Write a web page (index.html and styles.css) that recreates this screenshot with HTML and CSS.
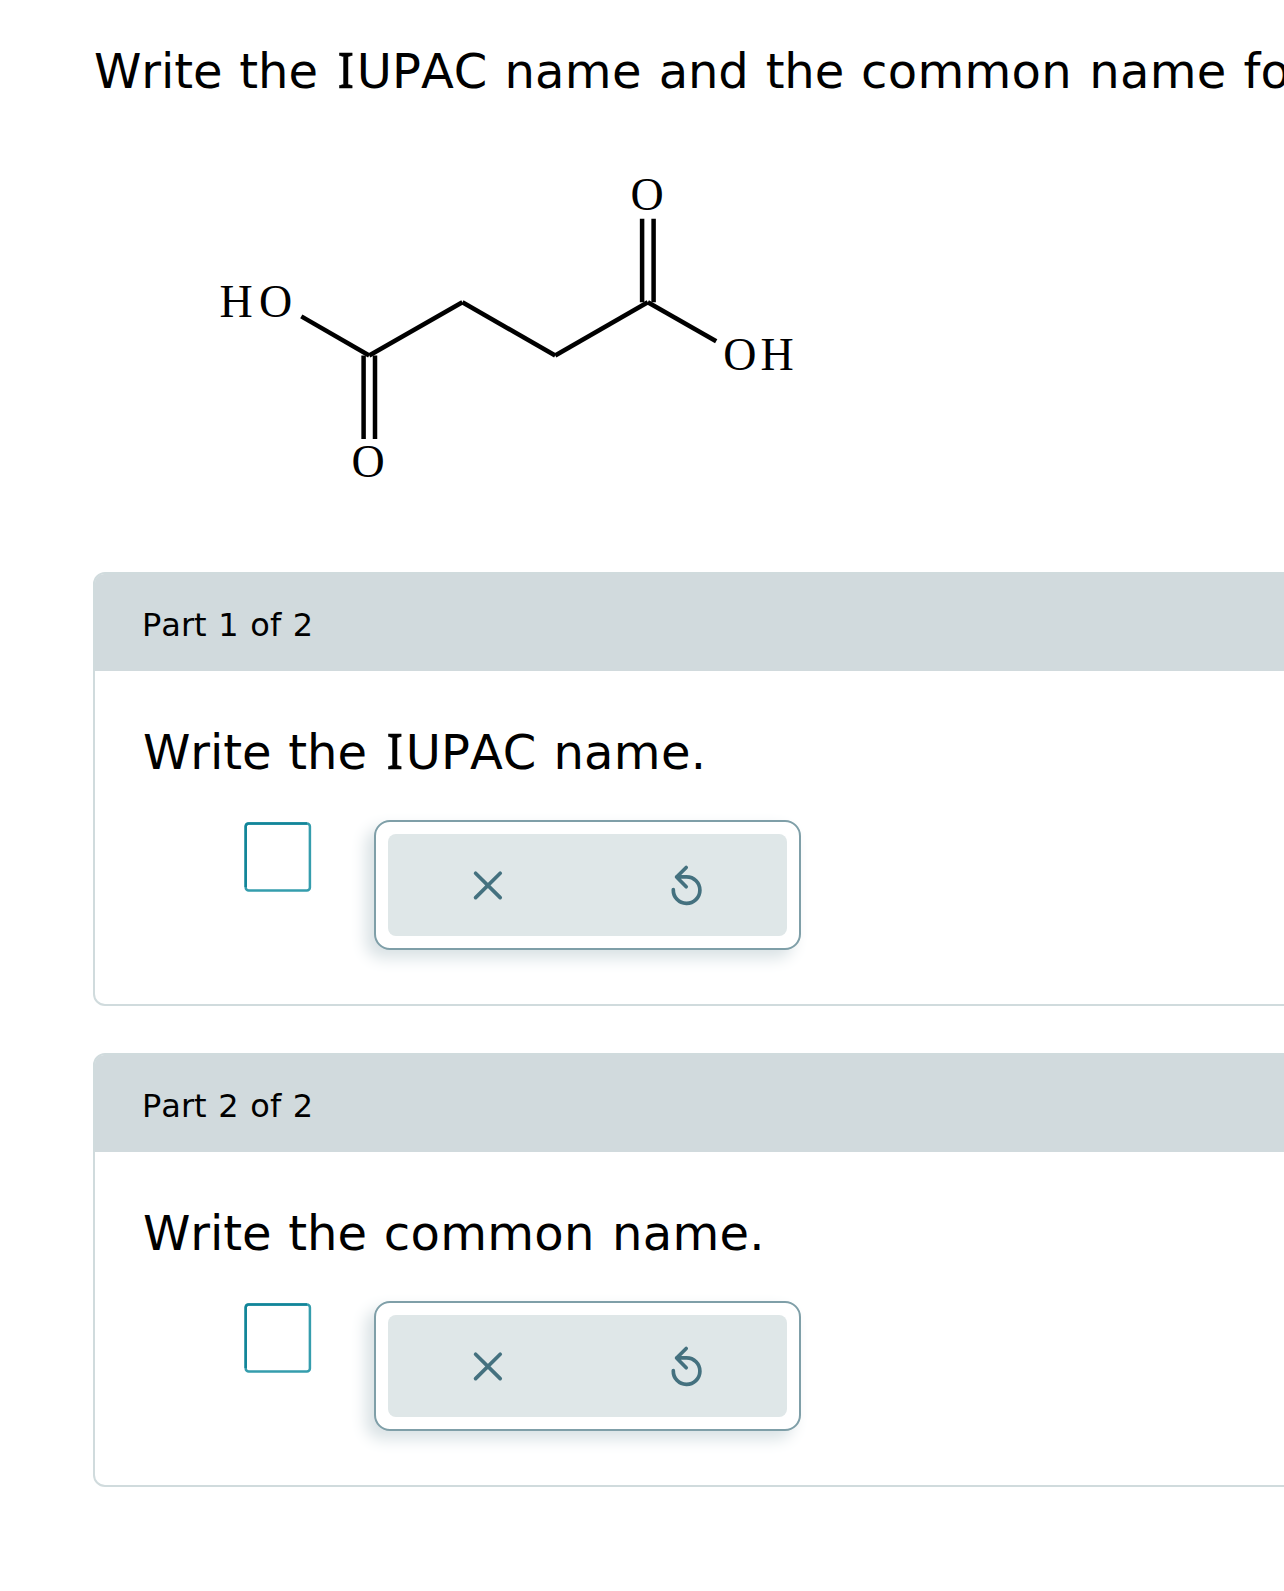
FILE: index.html
```html
<!DOCTYPE html>
<html lang="en">
<head>
<meta charset="utf-8">
<title>IUPAC and common names</title>
<link rel="stylesheet" href="styles.css">
</head>
<body>
<main class="question">
  <h1 class="prompt title">Write the <span class="serif-i">I</span><span class="caps">UPAC</span> <span class="wide">name</span> and the <span class="wide">common name</span> for</h1>

  <svg class="molecule" width="600" height="330" viewBox="200 160 600 330">
    <g class="bonds">
      <path d="M301.3 316.4 369.2 355.5"/>
      <path d="M369.2 355.5 462.4 302.3"/>
      <path d="M462.4 302.3 555.2 355.5"/>
      <path d="M555.2 355.5 647.8 302.3"/>
      <path d="M647.8 302.3 716.2 341.3"/>
      <path d="M363.6 355.5V439M375 355.5V439"/>
      <path d="M642.1 218.7V302.3M653.6 218.7V302.3"/>
    </g>
    <g class="atoms">
      <text x="219.5 258.9" y="317">HO</text>
      <text x="351.6" y="477">O</text>
      <text x="630.5" y="210">O</text>
      <text x="723.3 760.6" y="370">OH</text>
    </g>
  </svg>

  <section class="part">
    <header class="part-header">Part 1 of 2</header>
    <div class="part-body">
      <p class="prompt">Write the <span class="serif-i">I</span><span class="caps">UPAC</span> <span class="wide">name.</span></p>
      <div class="answer">
        <svg class="blank" width="70" height="74" viewBox="0 0 70 74"><rect x="2.7" y="3.4" width="64.2" height="67.2" rx="3"/><path d="M2.7 67V6.4q0-3 3-3H64"/></svg>
        <div class="tools">
          <div class="tools-inner">
            <button class="tool" aria-label="Clear"><svg width="40" height="50" viewBox="0 0 40 50"><path d="M7.6 13.2 32.2 37.6M32.2 13.2 7.6 37.6"/></svg></button>
            <button class="tool" aria-label="Undo"><svg width="40" height="50" viewBox="0 0 40 50"><path d="M6.3 29.7A13.3 13.3 0 1 0 19.6 16.8H9.6M19.2 7.5 9.6 17 19.2 26.8"/></svg></button>
          </div>
        </div>
      </div>
    </div>
  </section>

  <section class="part">
    <header class="part-header">Part 2 of 2</header>
    <div class="part-body">
      <p class="prompt">Write the <span class="wide">common name.</span></p>
      <div class="answer">
        <svg class="blank" width="70" height="74" viewBox="0 0 70 74"><rect x="2.7" y="3.4" width="64.2" height="67.2" rx="3"/><path d="M2.7 67V6.4q0-3 3-3H64"/></svg>
        <div class="tools">
          <div class="tools-inner">
            <button class="tool" aria-label="Clear"><svg width="40" height="50" viewBox="0 0 40 50"><path d="M7.6 13.2 32.2 37.6M32.2 13.2 7.6 37.6"/></svg></button>
            <button class="tool" aria-label="Undo"><svg width="40" height="50" viewBox="0 0 40 50"><path d="M6.3 29.7A13.3 13.3 0 1 0 19.6 16.8H9.6M19.2 7.5 9.6 17 19.2 26.8"/></svg></button>
          </div>
        </div>
      </div>
    </div>
  </section>
</main>
</body>
</html>
```

FILE: styles.css
```css
* { box-sizing: border-box; }

body {
  margin: 0;
  background: #fff;
  color: #000;
  font-family: Verdana, "DejaVu Sans", sans-serif;
  overflow: hidden;
}

.question {
  height: 1591px;
  padding: 41px 0 0 93px;
  overflow: hidden;
}

.prompt {
  margin: 0;
  height: 60px;
  font-size: 48px;
  line-height: 60px;
  font-weight: 400;
  font-kerning: none;
  letter-spacing: -0.1px;
  word-spacing: 1.8px;
  white-space: nowrap;
}

.title { padding-left: 1px; }

.prompt .wide { letter-spacing: 0.3px; }
.prompt .caps { letter-spacing: 0.05px; }

.serif-i {
  display: inline-block;
  width: 22px;
  font-family: "Noto Sans", sans-serif;
  font-size: 49px;
  line-height: 48px;
  letter-spacing: 0;
  text-align: center;
  -webkit-text-stroke: 0.5px #000;
}

.molecule {
  display: block;
  margin: 59px 0 82px 107px;
}

.bonds {
  fill: none;
  stroke: #000;
  stroke-width: 4.5;
}

.atoms {
  font-family: "Liberation Serif", "Times New Roman", serif;
  font-size: 46px;
}

.part {
  width: 1300px;
  height: 434px;
  margin-bottom: 47px;
  border: 2px solid #d0dbdd;
  border-radius: 12px;
}

.part-header {
  height: 97px;
  padding: 3px 0 0 47px;
  border-radius: 9px 0 0 0;
  background: #d1dadd;
  font-size: 32px;
  line-height: 97px;
  font-kerning: none;
  word-spacing: 1.5px;
}

.part-body { padding: 51px 0 0 48px; }

.answer {
  display: flex;
  align-items: flex-start;
  margin-top: 38px;
  padding-left: 100px;
}

.blank {
  fill: none;
  stroke: #359dad;
  stroke-width: 2.5;
}

.blank path { stroke: #128599; }

.tools {
  width: 427px;
  height: 130px;
  margin-left: 61px;
  padding: 12px;
  border: 2px solid #7f9fa8;
  border-radius: 16px;
  background: #fff;
  box-shadow: -8px 8px 16px #d8e1e4;
}

.tools-inner {
  display: flex;
  height: 102px;
  border-radius: 8px;
  background: #dfe7e8;
}

.tool {
  flex: 1;
  display: flex;
  align-items: center;
  justify-content: center;
  padding: 0;
  border: 0;
  background: none;
}

.tool path {
  fill: none;
  stroke: #44717f;
  stroke-width: 3.7;
  stroke-linecap: round;
  stroke-linejoin: round;
}
```
